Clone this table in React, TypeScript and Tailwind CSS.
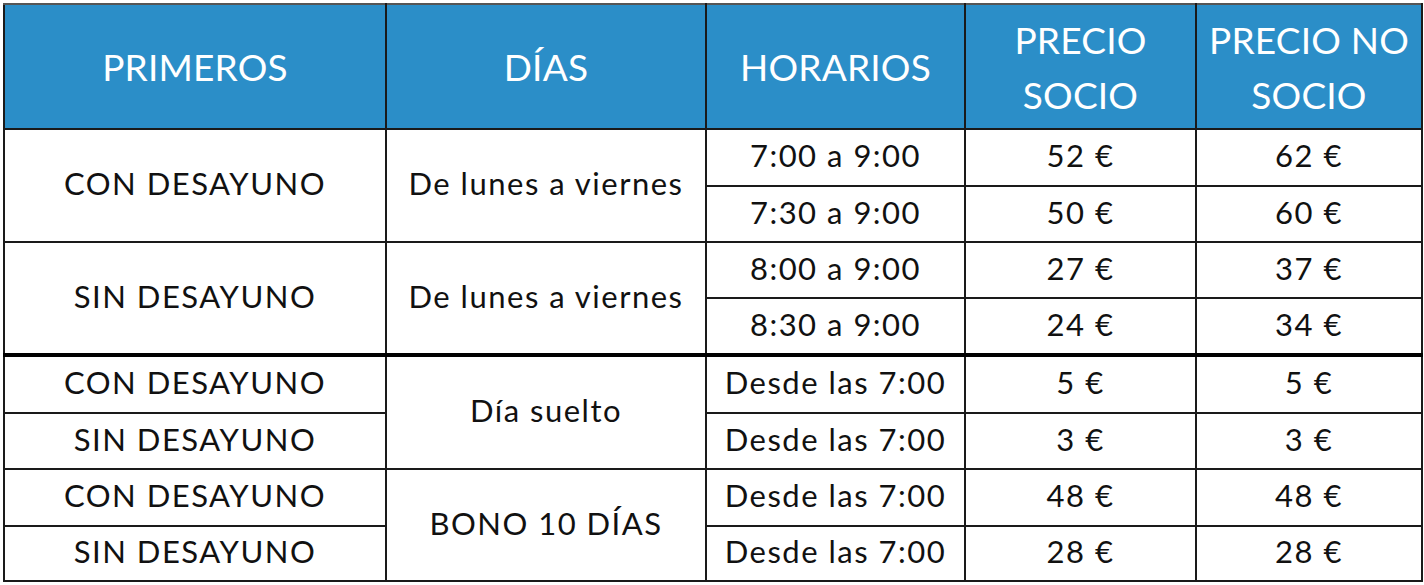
import React from "react";

const H = "border-2 border-[#1a1a1a] text-white font-normal text-center align-middle px-1";
const C = "border-2 border-[#1a1a1a] text-center align-middle text-[#111] pb-[5px]";

export default function App() {
  const body = { fontFamily: "Lato, 'Noto Sans', sans-serif" };
  return (
    <div className="w-[1424px] h-[585px] bg-white pl-[3px] pt-[3px]">
      <table
        className="table-fixed border-collapse w-[1418px] text-[31px] tracking-[1.5px]"
        style={body}
      >
        <colgroup>
          <col className="w-[382px]" />
          <col className="w-[320px]" />
          <col className="w-[259px]" />
          <col className="w-[231px]" />
          <col className="w-[226px]" />
        </colgroup>
        <thead>
          <tr className="h-[125px] bg-[#2b8ec8] text-[37px] leading-[55px] tracking-[0.2px]">
            <th className={H + " border-t-[#555]"}>PRIMEROS</th>
            <th className={H + " border-t-[#555]"}>DÍAS</th>
            <th className={H + " border-t-[#555]"}>HORARIOS</th>
            <th className={H + " border-t-[#555]"}>PRECIO<br />SOCIO</th>
            <th className={H + " border-t-[#555]"}>PRECIO NO<br />SOCIO</th>
          </tr>
        </thead>
        <tbody className="leading-[36px]">
          <tr className="h-[57px]">
            <td rowSpan={2} className={C}>CON DESAYUNO</td>
            <td rowSpan={2} className={C}>De lunes a viernes</td>
            <td className={C}>7:00 a 9:00</td>
            <td className={C}>52 €</td>
            <td className={C}>62 €</td>
          </tr>
          <tr className="h-[56px]">
            <td className={C}>7:30 a 9:00</td>
            <td className={C}>50 €</td>
            <td className={C}>60 €</td>
          </tr>
          <tr className="h-[56px]">
            <td rowSpan={2} className={C}>SIN DESAYUNO</td>
            <td rowSpan={2} className={C}>De lunes a viernes</td>
            <td className={C}>8:00 a 9:00</td>
            <td className={C}>27 €</td>
            <td className={C}>37 €</td>
          </tr>
          <tr className="h-[57px]">
            <td className={C}>8:30 a 9:00</td>
            <td className={C}>24 €</td>
            <td className={C}>34 €</td>
          </tr>
          <tr className="h-[58px]">
            <td className={C + " border-t-4 border-t-black"}>CON DESAYUNO</td>
            <td rowSpan={2} className={C + " border-t-4 border-t-black"}>Día suelto</td>
            <td className={C + " border-t-4 border-t-black"}>Desde las 7:00</td>
            <td className={C + " border-t-4 border-t-black"}>5 €</td>
            <td className={C + " border-t-4 border-t-black"}>5 €</td>
          </tr>
          <tr className="h-[56px]">
            <td className={C}>SIN DESAYUNO</td>
            <td className={C}>Desde las 7:00</td>
            <td className={C}>3 €</td>
            <td className={C}>3 €</td>
          </tr>
          <tr className="h-[57px]">
            <td className={C}>CON DESAYUNO</td>
            <td rowSpan={2} className={C}>BONO 10 DÍAS</td>
            <td className={C}>Desde las 7:00</td>
            <td className={C}>48 €</td>
            <td className={C}>48 €</td>
          </tr>
          <tr className="h-[55px]">
            <td className={C}>SIN DESAYUNO</td>
            <td className={C}>Desde las 7:00</td>
            <td className={C}>28 €</td>
            <td className={C}>28 €</td>
          </tr>
        </tbody>
      </table>
    </div>
  );
}
